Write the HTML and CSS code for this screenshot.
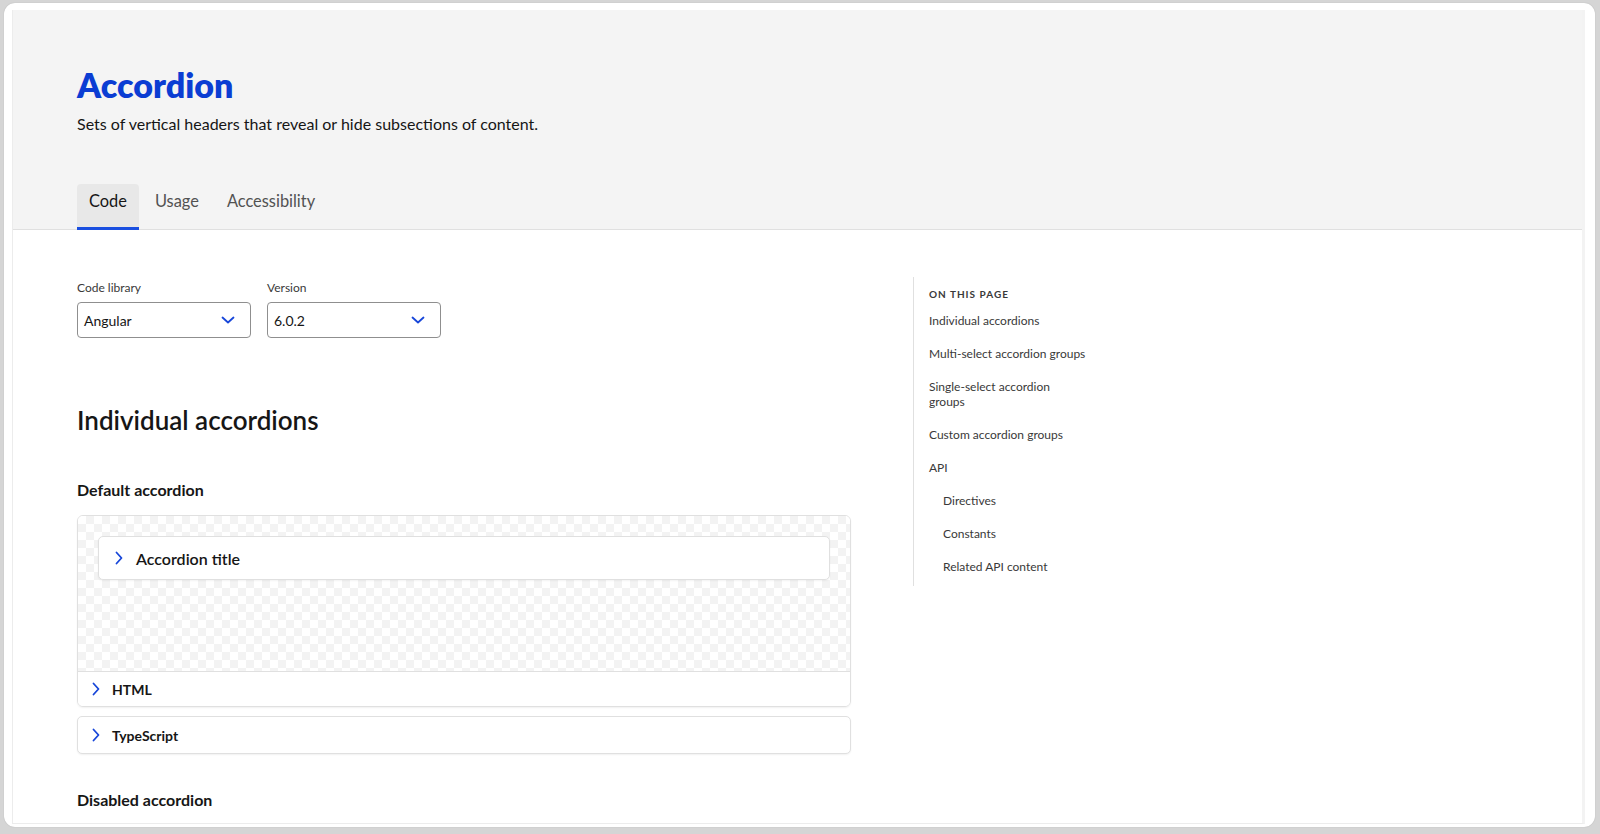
FILE: index.html
```html
<!DOCTYPE html>
<html lang="en">
<head>
<meta charset="utf-8">
<title>Accordion</title>
<link rel="stylesheet" href="styles.css">
</head>
<body>
<div class="window">
  <div class="page">
    <header class="hero">
      <h1 class="title">Accordion</h1>
      <p class="lead">Sets of vertical headers that reveal or hide subsections of content.</p>
      <nav class="tabs">
        <a class="tab active">Code</a>
        <a class="tab">Usage</a>
        <a class="tab">Accessibility</a>
      </nav>
    </header>
    <div class="body">
      <main class="main">
        <div class="pickers">
          <label class="field">
            <span class="field-label">Code library</span>
            <span class="select">Angular
              <svg class="caret" width="14" height="8" viewBox="0 0 14 8"><path d="M1.5 1.5 L7 6.5 L12.5 1.5" fill="none" stroke="#1746d9" stroke-width="1.8" stroke-linecap="round" stroke-linejoin="round"/></svg>
            </span>
          </label>
          <label class="field">
            <span class="field-label">Version</span>
            <span class="select">6.0.2
              <svg class="caret" width="14" height="8" viewBox="0 0 14 8"><path d="M1.5 1.5 L7 6.5 L12.5 1.5" fill="none" stroke="#1746d9" stroke-width="1.8" stroke-linecap="round" stroke-linejoin="round"/></svg>
            </span>
          </label>
        </div>

        <h2 class="section-title">Individual accordions</h2>
        <h3 class="sub-title">Default accordion</h3>

        <div class="demo">
          <div class="stage">
            <div class="acc-card">
              <svg class="chev" width="8" height="14" viewBox="0 0 8 14"><path d="M1.5 1.5 L6.5 7 L1.5 12.5" fill="none" stroke="#1746d9" stroke-width="1.8" stroke-linecap="round" stroke-linejoin="round"/></svg>
              <span class="acc-title">Accordion title</span>
            </div>
          </div>
          <div class="code-row">
            <svg class="chev" width="8" height="14" viewBox="0 0 8 14"><path d="M1.5 1.5 L6.5 7 L1.5 12.5" fill="none" stroke="#1746d9" stroke-width="1.8" stroke-linecap="round" stroke-linejoin="round"/></svg>
            <span class="code-label">HTML</span>
          </div>
        </div>
        <div class="code-card">
          <svg class="chev" width="8" height="14" viewBox="0 0 8 14"><path d="M1.5 1.5 L6.5 7 L1.5 12.5" fill="none" stroke="#1746d9" stroke-width="1.8" stroke-linecap="round" stroke-linejoin="round"/></svg>
          <span class="code-label">TypeScript</span>
        </div>

        <h3 class="sub-title disabled-title">Disabled accordion</h3>
      </main>

      <aside class="toc">
        <div class="toc-head">ON THIS PAGE</div>
        <ul class="toc-list">
          <li>Individual accordions</li>
          <li>Multi-select accordion groups</li>
          <li class="wrap">Single-select accordion groups</li>
          <li>Custom accordion groups</li>
          <li>API</li>
          <li class="sub">Directives</li>
          <li class="sub">Constants</li>
          <li class="sub">Related API content</li>
        </ul>
      </aside>
    </div>
  </div>
</div>
</body>
</html>
```

FILE: styles.css
```css
* { box-sizing: border-box; }

html, body {
  margin: 0;
  height: 834px;
  overflow: hidden;
}

body {
  background: #d5d5d5;
  font-family: Lato, "Open Sans", sans-serif;
  color: #161616;
  padding: 3px 5px 7px 4px;
}

.window {
  height: 824px;
  background: #ffffff;
  border-radius: 11px;
  padding: 7px 10px 3px 8px;
  box-shadow: 0 0 1px rgba(0,0,0,0.25);
}

.page {
  height: 814px;
  overflow: hidden;
  background: #ffffff;
  border-left: 1px solid #ececec;
  border-right: 3px solid #f3f3f3;
  border-bottom: 1px solid #ececec;
}

.hero {
  background: #f4f4f4;
  border-bottom: 1px solid #e0e0e0;
  padding: 55px 0 0 64px;
  height: 220px;
  display: flex;
  flex-direction: column;
}

.title {
  margin: 0;
  font-size: 34px;
  line-height: 40px;
  font-weight: 800;
  color: #0b3dd3;
}

.lead {
  margin: 8px 0 0;
  font-size: 16px;
  line-height: 22px;
  color: #161616;
}

.tabs {
  margin-top: auto;
  display: flex;
  gap: 4px;
}

.tab {
  padding: 0 12px 9px;
  height: 46px;
  line-height: 34px;
  font-size: 16.4px;
  color: #525252;
  border-radius: 4px 4px 0 0;
  border-bottom: 3px solid transparent;
  margin-bottom: -1px;
  display: flex;
  align-items: center;
}

.tab.active {
  background: #e8e8e8;
  color: #161616;
  border-bottom-color: #1a4fe0;
}

.body {
  display: flex;
  padding-left: 64px;
}

.main {
  width: 774px;
  padding-top: 50px;
}

.pickers {
  display: flex;
  gap: 16px;
}

.field {
  display: flex;
  flex-direction: column;
  width: 174px;
}

.field-label {
  font-size: 12px;
  line-height: 16px;
  color: #393939;
  margin-bottom: 6px;
}

.select {
  display: flex;
  align-items: center;
  justify-content: space-between;
  height: 36px;
  padding: 0 15px 0 6px;
  border: 1px solid #8f8f8f;
  border-radius: 4px;
  background: #fff;
  font-size: 14px;
  color: #161616;
}

.section-title {
  margin: 66px 0 0;
  font-size: 26px;
  line-height: 32px;
  font-weight: 600;
  color: #161616;
}

.sub-title {
  margin: 43px 0 0;
  font-size: 16px;
  line-height: 22px;
  font-weight: 700;
  color: #161616;
}

.demo {
  margin-top: 14px;
  border: 1px solid #e0e0e0;
  border-radius: 6px;
  overflow: hidden;
  box-shadow: 0 1px 2px rgba(0,0,0,0.06);
}

.stage {
  height: 156px;
  padding: 20px;
  background-color: #ffffff;
  background-image:
    linear-gradient(45deg, #f3f3f3 25%, transparent 25%, transparent 75%, #f3f3f3 75%),
    linear-gradient(45deg, #f3f3f3 25%, transparent 25%, transparent 75%, #f3f3f3 75%);
  background-size: 16px 16px;
  background-position: 0 0, 8px 8px;
  border-bottom: 1px solid #e0e0e0;
}

.acc-card {
  display: flex;
  align-items: center;
  gap: 13px;
  height: 44px;
  padding: 0 16px;
  background: #fff;
  border: 1px solid #e0e0e0;
  border-radius: 5px;
  box-shadow: 0 1px 2px rgba(0,0,0,0.05);
}

.acc-title {
  font-size: 16px;
  font-weight: 600;
  color: #161616;
}

.chev { flex: none; }

.code-row,
.code-card {
  display: flex;
  align-items: center;
  gap: 12px;
  height: 34px;
  padding: 0 14px;
  background: #fff;
}

.code-card {
  margin-top: 9px;
  height: 38px;
  border: 1px solid #e0e0e0;
  border-radius: 5px;
  box-shadow: 0 1px 2px rgba(0,0,0,0.06);
}

.code-label {
  font-size: 14px;
  font-weight: 700;
  color: #161616;
}

.disabled-title {
  margin-top: 35px;
}

.toc {
  margin-left: 62px;
  margin-top: 47px;
  height: 309px;
  border-left: 1px solid #e0e0e0;
  padding: 10px 0 0 15px;
  width: 175px;
}

.toc-head {
  font-size: 10px;
  line-height: 14px;
  font-weight: 700;
  letter-spacing: 1px;
  color: #393939;
}

.toc-list {
  list-style: none;
  margin: 12px 0 0;
  padding: 0;
  display: flex;
  flex-direction: column;
  gap: 18px;
}

.toc-list li {
  font-size: 12px;
  line-height: 15px;
  color: #393939;
  width: 160px;
}

.toc-list li.wrap { width: 130px; }

.toc-list li.sub { padding-left: 14px; }
```
